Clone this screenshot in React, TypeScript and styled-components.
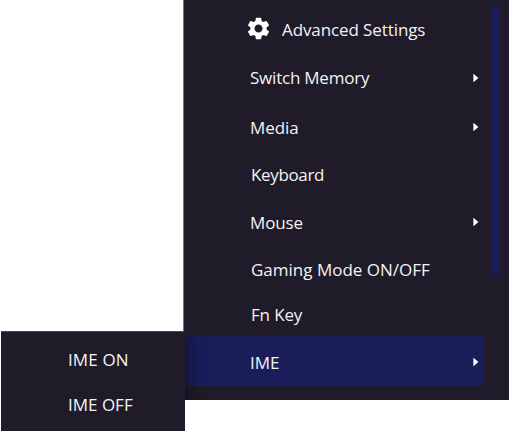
import React from 'react';
import styled, { createGlobalStyle } from 'styled-components';
import { MdSettings } from 'react-icons/md';

const GlobalStyle = createGlobalStyle`
  * { box-sizing: border-box; }
  body {
    margin: 0;
    background: #fff;
    overflow: hidden;
  }
`;

const Screen = styled.main`
  display: grid;
  grid-template-columns: 183px 326px;
  width: 509px;
  height: 431px;
  font-family: 'Open Sans', 'Noto Sans', sans-serif;
  font-size: 17px;
  color: #f3f3f5;
`;

const Menu = styled.nav`
  grid-column: 2;
  grid-row: 1;
  display: flex;
  height: 400px;
  border-left: 1px solid #77747d;
  background: #1f1b28;
`;

const MenuList = styled.div`
  display: flex;
  flex-direction: column;
  width: 300px;
  padding-top: 6px;
`;

const Row = styled.div<{ $height: number; $indent?: number; $active?: boolean }>`
  display: flex;
  flex: none;
  align-items: center;
  height: ${(p) => p.$height}px;
  padding-left: ${(p) => p.$indent ?? 66}px;
  padding-right: 5px;
  background: ${(p) => (p.$active ? '#191d5a' : 'transparent')};
`;

const Label = styled.span<{ $spacing?: number; $drop?: number }>`
  line-height: 24px;
  white-space: nowrap;
  letter-spacing: ${(p) => p.$spacing ?? 0}px;
  padding-top: ${(p) => p.$drop ?? 0}px;
`;

const Gear = styled(MdSettings)`
  flex: none;
  width: 27px;
  height: 27px;
  margin: -3px 10px 0 0;
  color: #fff;
`;

const Arrow = styled.svg<{ $drop: number }>`
  flex: none;
  width: 6px;
  height: 10px;
  margin: ${(p) => p.$drop}px 0 0 auto;
  fill: #fff;
`;

const ScrollThumb = styled.div`
  width: 8px;
  height: 269px;
  margin: 6px 0 0 8px;
  border-radius: 4px;
  background: #191d5a;
`;

const SubMenu = styled.nav`
  grid-column: 1;
  grid-row: 1;
  align-self: end;
  z-index: 1;
  width: 184px;
  height: 100px;
  margin-left: 1px;
  padding-top: 5px;
  border-top: 1px solid #4d4a55;
  background: #1f1b28;
  box-shadow: 5px 2px 14px -2px rgba(16, 14, 24, 0.75);
  clip-path: polygon(0 0, 183px 0, 183px 5px, 205px 5px, 205px 69px, 184px 69px, 184px 100px, 0 100px);
`;

type Item = {
  label: string;
  height: number;
  spacing?: number;
  indent?: number;
  drop?: number;
  arrow?: boolean;
  active?: boolean;
};

const items: Item[] = [
  { label: 'Switch Memory', height: 48, spacing: -0.22, arrow: true },
  { label: 'Media', height: 51, spacing: -0.1, arrow: true },
  { label: 'Keyboard', height: 44, spacing: -0.35, indent: 67 },
  { label: 'Mouse', height: 50, spacing: -0.15, drop: 2, arrow: true },
  { label: 'Gaming Mode ON/OFF', height: 45, spacing: 0, indent: 67 },
  { label: 'Fn Key', height: 44, spacing: -0.15, indent: 67, drop: 2 },
  { label: 'IME', height: 50, drop: 3, arrow: true, active: true },
];

export default function App() {
  return (
    <>
      <GlobalStyle />
      <Screen>
        <Menu>
          <MenuList>
            <Row $height={48} $indent={61}>
              <Gear />
              <Label $spacing={-0.1}>Advanced Settings</Label>
            </Row>
            {items.map((item) => (
              <Row key={item.label} $height={item.height} $indent={item.indent} $active={item.active}>
                <Label $spacing={item.spacing} $drop={item.drop}>
                  {item.label}
                </Label>
                {item.arrow && (
                  <Arrow viewBox="0 0 6 10" $drop={item.active ? 1 : -1}>
                    <path d="M.4 .8 5.4 5 .4 9.2Z" />
                  </Arrow>
                )}
              </Row>
            ))}
          </MenuList>
          <ScrollThumb />
        </Menu>
        <SubMenu>
          <Row $height={45} $indent={67}>
            <Label $spacing={0.12}>IME ON</Label>
          </Row>
          <Row $height={45} $indent={67}>
            <Label>IME OFF</Label>
          </Row>
        </SubMenu>
      </Screen>
    </>
  );
}
